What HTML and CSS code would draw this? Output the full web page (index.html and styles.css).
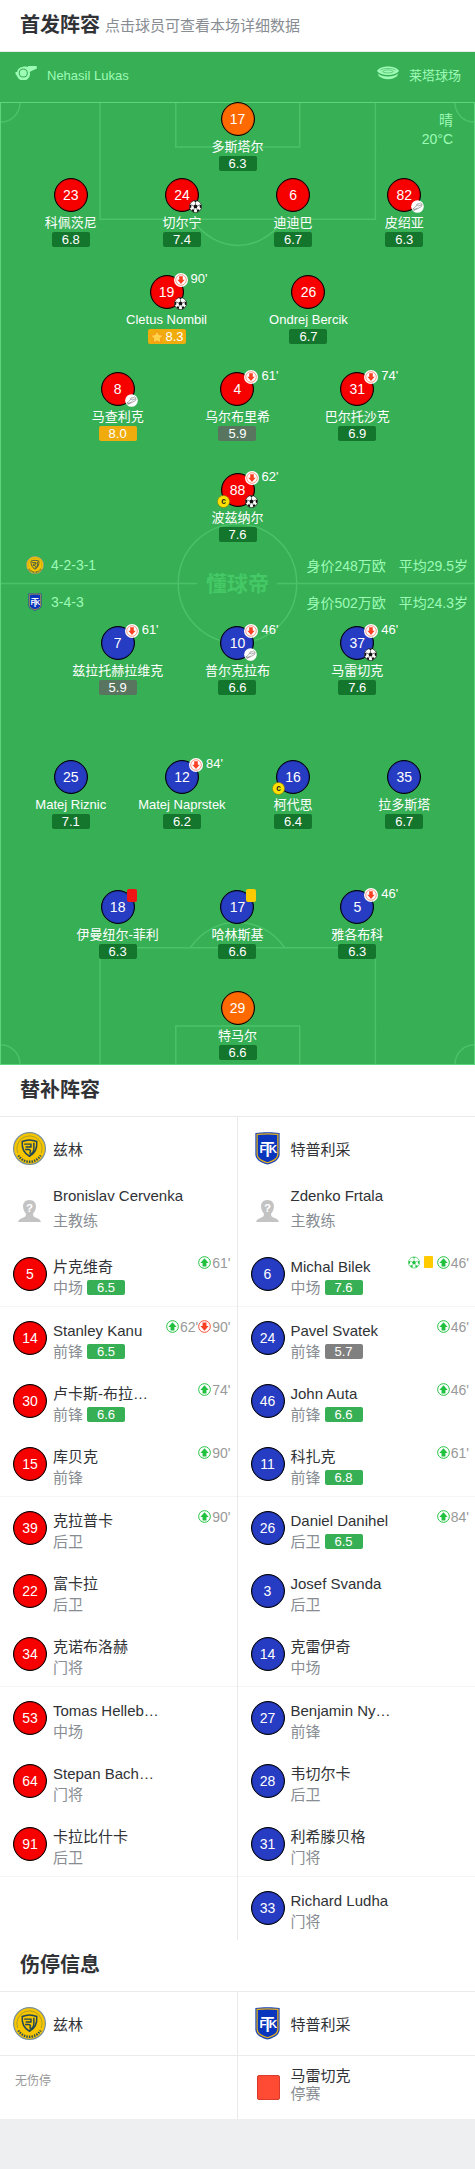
FILE: index.html
```html
<!DOCTYPE html>
<html lang="zh-CN">
<head>
    <meta charset="UTF-8">
    <meta name="viewport" content="width=device-width, initial-scale=1">
    <title>首发阵容</title>
    <link rel="stylesheet" href="styles.css">
</head>
<body>
    <!-- shared icons -->
    <svg class="sprite" aria-hidden="true">
        <symbol id="i-down" viewBox="0 0 14 14">
            <circle cx="7" cy="7" r="7" fill="#fff"/>
            <circle cx="7" cy="7" r="5.300" fill="none" stroke="#fa6b55" stroke-width=".7"/>
            <path d="M5.200 3.300h3.600v3.400h1.900L7 10.900 3.300 6.700h1.900z" fill="#fa4024"/>
        </symbol>
        <symbol id="i-out" viewBox="0 0 12 12">
            <circle cx="6" cy="6" r="5.400" fill="#fff" stroke="#fa4b32" stroke-width=".9"/>
            <path d="M4.200 2.300h3.600v3.300h2L6 9.900 2.200 5.600h2z" fill="#fa4024"/>
        </symbol>
        <symbol id="i-in" viewBox="0 0 12 12">
            <circle cx="6" cy="6" r="5.400" fill="#fff" stroke="#1fc13f" stroke-width=".9"/>
            <path d="M4.200 9.700h3.600V6.400h2L6 2.100 2.200 6.400h2z" fill="#1fc13f"/>
        </symbol>
        <symbol id="i-ball" viewBox="0 0 14 14">
            <circle cx="7" cy="7" r="6.500" fill="#fff" stroke="currentColor" stroke-width=".7"/>
            <path d="M7 4.600l2.300 1.700-.9 2.700H5.600l-.9-2.700zM5 .9h4L7 2.400zM.7 5.500L2.600 5.200 2.400 8 .8 8.800zM13.300 5.500l-1.900-.3.200 2.800 1.600.8zM3.200 10l2.300.9-.4 2.200-2.400-1.400zM10.800 10l-2.300.9.400 2.200 2.400-1.400z" fill="currentColor"/>
            <path d="M7 2.400v2.200M2.600 5.200l2.100 1.100M11.400 5.200L9.300 6.300M5.600 9l-.4 1.900M8.400 9l.4 1.900" stroke="currentColor" stroke-width=".6"/>
        </symbol>
        <symbol id="i-boot" viewBox="0 0 14 14">
            <circle cx="7" cy="7" r="6.800" fill="#fff"/>
            <path d="M2.200 9.400C4 8.800 5 7.500 6.200 5.200L7.300 3.800l1.200.7 1.700-1.300L12 4.800 11.200 7 7.500 9.200 3.600 11c-1 .2-1.600-.9-1.400-1.600zM6.200 5.200l2 1.300L11.500 5M3.200 10.600L7 8.500" fill="none" stroke="#777" stroke-width=".7" stroke-linejoin="round"/>
        </symbol>
        <symbol id="i-captain" viewBox="0 0 14 14">
            <circle cx="7" cy="7" r="6.500" fill="#ffe100" stroke="#8a7f10" stroke-width=".7"/>
            <text class="captain-text" x="7" y="10" text-anchor="middle">c</text>
        </symbol>
        <symbol id="i-star" viewBox="0 0 14 14">
            <path d="M7 .8l2 3.800 4.400.7-3.100 3.100.7 4.500L7 11l-4 1.900.7-4.500L.6 5.300 5 4.600z" fill="#ffd24a" stroke="#f98a10" stroke-width=".8" stroke-linejoin="round"/>
        </symbol>
        <symbol id="i-coach" viewBox="0 0 24 24">
            <path d="M12 0c4.500 0 7 3 6.700 7.200-.2 3-1.500 5.300-2.900 6.800-.4 2.500.5 3.500 3 4.600 2.700 1.100 4.500 1.900 5.200 4.400H0c.7-2.500 2.500-3.300 5.200-4.400 2.500-1.100 3.400-2.100 3-4.600C6.800 12.500 5.500 10.200 5.300 7.200 5 3 7.500 0 12 0z" fill="#c3c3c3"/>
            <text class="coach-text" x="12" y="13" text-anchor="middle">?</text>
        </symbol>
        <symbol id="i-whistle" viewBox="0 0 22 14">
            <path d="M7.500 1C9 .3 11 .5 12.500 1l1-1h8l.500 2.500-6.500 3-.8.5A6.600 6.600 0 0 1 2 10L.5 8V6L2 6a6.500 6.500 0 0 1 5.500-5z" fill="#9dfbb6"/>
            <circle cx="8.300" cy="7" r="4.600" fill="#37af55"/>
            <circle cx="8.300" cy="7" r="3.500" fill="#9dfbb6"/>
        </symbol>
        <symbol id="i-stadium" viewBox="0 0 22 13">
            <path d="M0 4.600C2 .9 7 0 11 0s9 .9 11 4.600c-2 2.800-6.500 4-11 4S2 7.400 0 4.600z" fill="#9dfbb6"/>
            <path d="M.6 6.800C3 9 7 10 11 10s8-1 10.400-3.200L20 9.700c-2.500 1.900-5.500 3-9 3s-6.500-1.100-9-3z" fill="#9dfbb6"/>
            <path d="M3 3.900c3-2.600 13-2.600 16 0M5.500 5.200c2-2.400 9-2.400 11 0-2.500 1.700-8.500 1.700-11 0z" fill="none" stroke="#37af55" stroke-width=".6"/>
        </symbol>
        <symbol id="i-zlin" viewBox="0 0 34 34">
            <circle cx="17" cy="17" r="16.400" fill="#f6c500" stroke="#78909a" stroke-width="1.200"/>
            <circle cx="17" cy="17" r="13" fill="none" stroke="#8a8a3c" stroke-width=".6" stroke-dasharray="50 32" transform="rotate(160 17 17)"/>
            <path d="M5.500 24.200A13.500 13.500 0 0 0 28.500 24.200" fill="none" stroke="#2b4b58" stroke-width="2.400" stroke-dasharray="1.500 1.100"/>
            <path d="M9.500 9.800c5-2.200 10-2.200 15 0 .5 6.500-1.500 12-7.500 15.200C11 21.800 9 16.300 9.500 9.800z" fill="none" stroke="#214654" stroke-width="1.500"/>
            <path d="M11.500 12.500h7v3h-5.500M21.500 11v6c0 3.500-2 5.500-4.500 6M12.500 18h3.500c2.500 0 2.500 2.500 1 3.500" fill="none" stroke="#214654" stroke-width="1.500"/>
        </symbol>
        <symbol id="i-teplice" viewBox="0 0 26 34">
            <path d="M.5 1C8 0 18 0 25.500 1v22c0 5-4.500 8.500-12.500 10.500C5 31.500.5 28 .5 23z" fill="#1740b4"/>
            <path d="M2.300 2.500c7-.8 14.400-.8 21.400 0V23c0 4-4 6.800-10.700 8.700C6.300 29.800 2.300 27 2.300 23z" fill="#0a35bd" stroke="#e5b21c" stroke-width="1.300"/>
            <text class="crest-letter" x="8.500" y="22" text-anchor="middle">F</text>
            <text class="crest-letter crest-tall" x="13" y="26" text-anchor="middle">T</text>
            <text class="crest-letter" x="18.500" y="22" text-anchor="middle">K</text>
        </symbol>
    </svg>

    <main class="page">
        <header class="section-head">
            <h2>首发阵容</h2>
            <span class="hint">点击球员可查看本场详细数据</span>
        </header>

        <section class="lineup">
            <div class="match-info">
                <span class="referee"><svg class="info-icon"><use href="#i-whistle"/></svg>Nehasil Lukas</span>
                <span class="stadium"><svg class="info-icon"><use href="#i-stadium"/></svg>莱塔球场</span>
            </div>

            <div class="pitch">
                <svg class="pitch-lines" viewBox="0 0 475 963" preserveAspectRatio="none" aria-hidden="true">
                    <g fill="none" stroke="#4bc26a" stroke-width="1.500">
                        <path d="M99.500 0v116.500h276.500V0M175.500 0v44h124.500V0M192 116.500c24 35 68 35 92 0"/>
                        <path d="M99.500 963V846.500h276.500V963M175.500 963v-38h124.500v38M190 846.500c24-34 71-34 95 0"/>
                        <path d="M0 19A19 19 0 0 0 19 0M475 19A19 19 0 0 1 456 0M0 944a19 19 0 0 1 19 19M475 944a19 19 0 0 0-19 19"/>
                        <path d="M0 481.500h197M277 481.500h198"/>
                        <circle cx="237.500" cy="481.500" r="59.500"/>
                    </g>
                </svg>
                <span class="watermark">懂球帝</span>
                <div class="weather">晴<br>20°C</div>

                <div class="formations">
                    <div class="formation">
                        <svg class="mini-crest"><use href="#i-zlin"/></svg>
                        <span class="shape">4-2-3-1</span>
                        <span>身价248万欧</span>
                        <span>平均29.5岁</span>
                    </div>
                    <div class="formation">
                        <svg class="mini-crest"><use href="#i-teplice"/></svg>
                        <span class="shape">3-4-3</span>
                        <span>身价502万欧</span>
                        <span>平均24.3岁</span>
                    </div>
                </div>

                <div class="half home">
                    <div class="line one">
                        <a class="player" href="#"><span class="num keeper">17</span><span class="name">多斯塔尔</span><span class="rate">6.3</span></a>
                    </div>
                    <div class="line four">
                        <a class="player" href="#"><span class="num red">23</span><span class="name">科佩茨尼</span><span class="rate">6.8</span></a>
                        <a class="player" href="#"><span class="num red">24<svg class="tag tag-br"><use href="#i-ball"/></svg></span><span class="name">切尔宁</span><span class="rate">7.4</span></a>
                        <a class="player" href="#"><span class="num red">6</span><span class="name">迪迪巴</span><span class="rate">6.7</span></a>
                        <a class="player" href="#"><span class="num red">82<svg class="tag tag-br"><use href="#i-boot"/></svg></span><span class="name">皮绍亚</span><span class="rate">6.3</span></a>
                    </div>
                    <div class="line two">
                        <a class="player" href="#"><span class="num red">19<span class="tag-off"><svg><use href="#i-down"/></svg>90'</span><svg class="tag tag-br"><use href="#i-ball"/></svg></span><span class="name">Cletus Nombil</span><span class="rate gold"><svg><use href="#i-star"/></svg>8.3</span></a>
                        <a class="player" href="#"><span class="num red">26</span><span class="name">Ondrej Bercik</span><span class="rate">6.7</span></a>
                    </div>
                    <div class="line three">
                        <a class="player" href="#"><span class="num red">8<svg class="tag tag-br"><use href="#i-boot"/></svg></span><span class="name">马查利克</span><span class="rate gold">8.0</span></a>
                        <a class="player" href="#"><span class="num red">4<span class="tag-off"><svg><use href="#i-down"/></svg>61'</span></span><span class="name">乌尔布里希</span><span class="rate low">5.9</span></a>
                        <a class="player" href="#"><span class="num red">31<span class="tag-off"><svg><use href="#i-down"/></svg>74'</span></span><span class="name">巴尔托沙克</span><span class="rate">6.9</span></a>
                    </div>
                    <div class="line one">
                        <a class="player" href="#"><span class="num red">88<span class="tag-off"><svg><use href="#i-down"/></svg>62'</span><svg class="tag tag-bl"><use href="#i-captain"/></svg><svg class="tag tag-br"><use href="#i-ball"/></svg></span><span class="name">波兹纳尔</span><span class="rate">7.6</span></a>
                    </div>
                </div>

                <div class="half away">
                    <div class="line three">
                        <a class="player" href="#"><span class="num blue">7<span class="tag-off"><svg><use href="#i-down"/></svg>61'</span></span><span class="name">兹拉托赫拉维克</span><span class="rate low">5.9</span></a>
                        <a class="player" href="#"><span class="num blue">10<span class="tag-off"><svg><use href="#i-down"/></svg>46'</span><svg class="tag tag-br"><use href="#i-boot"/></svg></span><span class="name">普尔克拉布</span><span class="rate">6.6</span></a>
                        <a class="player" href="#"><span class="num blue">37<span class="tag-off"><svg><use href="#i-down"/></svg>46'</span><svg class="tag tag-br"><use href="#i-ball"/></svg></span><span class="name">马雷切克</span><span class="rate">7.6</span></a>
                    </div>
                    <div class="line four">
                        <a class="player" href="#"><span class="num blue">25</span><span class="name">Matej Riznic</span><span class="rate">7.1</span></a>
                        <a class="player" href="#"><span class="num blue">12<span class="tag-off"><svg><use href="#i-down"/></svg>84'</span></span><span class="name">Matej Naprstek</span><span class="rate">6.2</span></a>
                        <a class="player" href="#"><span class="num blue">16<svg class="tag tag-bl"><use href="#i-captain"/></svg></span><span class="name">柯代思</span><span class="rate">6.4</span></a>
                        <a class="player" href="#"><span class="num blue">35</span><span class="name">拉多斯塔</span><span class="rate">6.7</span></a>
                    </div>
                    <div class="line three">
                        <a class="player" href="#"><span class="num blue">18<i class="tag-card card-red"></i></span><span class="name">伊曼纽尔-菲利</span><span class="rate">6.3</span></a>
                        <a class="player" href="#"><span class="num blue">17<i class="tag-card card-yellow"></i></span><span class="name">哈林斯基</span><span class="rate">6.6</span></a>
                        <a class="player" href="#"><span class="num blue">5<span class="tag-off"><svg><use href="#i-down"/></svg>46'</span></span><span class="name">雅各布科</span><span class="rate">6.3</span></a>
                    </div>
                    <div class="line one">
                        <a class="player" href="#"><span class="num keeper">29</span><span class="name">特马尔</span><span class="rate">6.6</span></a>
                    </div>
                </div>
            </div>
        </section>

        <header class="section-head">
            <h2>替补阵容</h2>
        </header>
        <section class="columns">
            <div class="column">
                <div class="team"><svg class="crest"><use href="#i-zlin"/></svg>兹林</div>
                <div class="coach">
                    <svg class="avatar"><use href="#i-coach"/></svg>
                    <div>Bronislav Cervenka<span>主教练</span></div>
                </div>
                <ul class="subs">
                    <li><a href="#"><span class="num red">5</span><span class="sub-text"><span class="sub-name">片克维奇</span><span class="sub-pos">中场<b class="rate">6.5</b></span></span><span class="events"><svg><use href="#i-in"/></svg>61'</span></a></li>
                    <li><a href="#"><span class="num red">14</span><span class="sub-text"><span class="sub-name">Stanley Kanu</span><span class="sub-pos">前锋<b class="rate">6.5</b></span></span><span class="events"><svg><use href="#i-in"/></svg>62'<svg><use href="#i-out"/></svg>90'</span></a></li>
                    <li><a href="#"><span class="num red">30</span><span class="sub-text"><span class="sub-name">卢卡斯-布拉…</span><span class="sub-pos">前锋<b class="rate">6.6</b></span></span><span class="events"><svg><use href="#i-in"/></svg>74'</span></a></li>
                    <li><a href="#"><span class="num red">15</span><span class="sub-text"><span class="sub-name">库贝克</span><span class="sub-pos">前锋</span></span><span class="events"><svg><use href="#i-in"/></svg>90'</span></a></li>
                    <li><a href="#"><span class="num red">39</span><span class="sub-text"><span class="sub-name">克拉普卡</span><span class="sub-pos">后卫</span></span><span class="events"><svg><use href="#i-in"/></svg>90'</span></a></li>
                    <li><a href="#"><span class="num red">22</span><span class="sub-text"><span class="sub-name">富卡拉</span><span class="sub-pos">后卫</span></span></a></li>
                    <li><a href="#"><span class="num red">34</span><span class="sub-text"><span class="sub-name">克诺布洛赫</span><span class="sub-pos">门将</span></span></a></li>
                    <li><a href="#"><span class="num red">53</span><span class="sub-text"><span class="sub-name">Tomas Helleb…</span><span class="sub-pos">中场</span></span></a></li>
                    <li><a href="#"><span class="num red">64</span><span class="sub-text"><span class="sub-name">Stepan Bach…</span><span class="sub-pos">门将</span></span></a></li>
                    <li><a href="#"><span class="num red">91</span><span class="sub-text"><span class="sub-name">卡拉比什卡</span><span class="sub-pos">后卫</span></span></a></li>
                </ul>
            </div>
            <div class="column">
                <div class="team"><svg class="crest"><use href="#i-teplice"/></svg>特普利采</div>
                <div class="coach">
                    <svg class="avatar"><use href="#i-coach"/></svg>
                    <div>Zdenko Frtala<span>主教练</span></div>
                </div>
                <ul class="subs">
                    <li><a href="#"><span class="num blue">6</span><span class="sub-text"><span class="sub-name">Michal Bilek</span><span class="sub-pos">中场<b class="rate">7.6</b></span></span><span class="events"><svg class="goal"><use href="#i-ball"/></svg><i class="card-yellow"></i><svg><use href="#i-in"/></svg>46'</span></a></li>
                    <li><a href="#"><span class="num blue">24</span><span class="sub-text"><span class="sub-name">Pavel Svatek</span><span class="sub-pos">前锋<b class="rate low">5.7</b></span></span><span class="events"><svg><use href="#i-in"/></svg>46'</span></a></li>
                    <li><a href="#"><span class="num blue">46</span><span class="sub-text"><span class="sub-name">John Auta</span><span class="sub-pos">前锋<b class="rate">6.6</b></span></span><span class="events"><svg><use href="#i-in"/></svg>46'</span></a></li>
                    <li><a href="#"><span class="num blue">11</span><span class="sub-text"><span class="sub-name">科扎克</span><span class="sub-pos">前锋<b class="rate">6.8</b></span></span><span class="events"><svg><use href="#i-in"/></svg>61'</span></a></li>
                    <li><a href="#"><span class="num blue">26</span><span class="sub-text"><span class="sub-name">Daniel Danihel</span><span class="sub-pos">后卫<b class="rate">6.5</b></span></span><span class="events"><svg><use href="#i-in"/></svg>84'</span></a></li>
                    <li><a href="#"><span class="num blue">3</span><span class="sub-text"><span class="sub-name">Josef Svanda</span><span class="sub-pos">后卫</span></span></a></li>
                    <li><a href="#"><span class="num blue">14</span><span class="sub-text"><span class="sub-name">克雷伊奇</span><span class="sub-pos">中场</span></span></a></li>
                    <li><a href="#"><span class="num blue">27</span><span class="sub-text"><span class="sub-name">Benjamin Ny…</span><span class="sub-pos">前锋</span></span></a></li>
                    <li><a href="#"><span class="num blue">28</span><span class="sub-text"><span class="sub-name">韦切尔卡</span><span class="sub-pos">后卫</span></span></a></li>
                    <li><a href="#"><span class="num blue">31</span><span class="sub-text"><span class="sub-name">利希滕贝格</span><span class="sub-pos">门将</span></span></a></li>
                    <li><a href="#"><span class="num blue">33</span><span class="sub-text"><span class="sub-name">Richard Ludha</span><span class="sub-pos">门将</span></span></a></li>
                </ul>
            </div>
        </section>

        <header class="section-head">
            <h2>伤停信息</h2>
        </header>
        <section class="columns injuries">
            <div class="column">
                <div class="team"><svg class="crest"><use href="#i-zlin"/></svg>兹林</div>
                <p class="none">无伤停</p>
            </div>
            <div class="column">
                <div class="team"><svg class="crest"><use href="#i-teplice"/></svg>特普利采</div>
                <div class="absent"><i class="ban"></i><div>马雷切克<span>停赛</span></div></div>
            </div>
        </section>
    </main>
</body>
</html>
```

FILE: styles.css
```css
* {
    margin: 0;
    padding: 0;
    box-sizing: border-box;
}

body {
    font-family: "Liberation Sans", "Noto Sans CJK SC", sans-serif;
    font-size: 15px;
    color: #303236;
    background: #eeeff1;
}

a {
    color: inherit;
    text-decoration: none;
}

.sprite {
    display: none;
}

.page {
    background: #fff;
}

.section-head {
    display: flex;
    align-items: center;
    gap: 5px;
    height: 52px;
    padding: 0 20px 2px;
    border-bottom: 1px solid #e9eaeb;
}

.section-head h2 {
    font-size: 20px;
    line-height: 24px;
}

.hint {
    color: #888d93;
}

/* pitch */
.lineup {
    background: #37af55;
    color: #fff;
    font-size: 13px;
}

.match-info {
    display: flex;
    justify-content: space-between;
    height: 50px;
    padding: 0 14px 0 15px;
    line-height: 48px;
    color: #9dfbb6;
}

.match-info span {
    display: flex;
    gap: 10px;
}

.info-icon {
    width: 22px;
    height: 14px;
    margin-top: 14px;
}

.pitch {
    position: relative;
    border: 1px solid #5cd67c;
}

.pitch-lines {
    position: absolute;
    inset: 0;
    width: 100%;
    height: 100%;
}

.watermark {
    position: absolute;
    top: 50%;
    left: 50%;
    transform: translate(-50%, -50%);
    font-size: 21px;
    font-weight: bold;
    line-height: 24px;
    color: #45c866;
}

.weather {
    position: absolute;
    top: 8px;
    right: 21px;
    font-size: 14px;
    line-height: 19px;
    text-align: right;
    color: #9dfbb6;
}

.formations {
    position: absolute;
    top: 50%;
    left: 0;
    right: 0;
    transform: translateY(-50%);
    font-size: 14px;
    color: #9dfbb6;
}

.formation {
    display: flex;
    align-items: center;
    gap: 13px;
    height: 37px;
    padding: 0 6px 0 25px;
}

.mini-crest {
    width: 18px;
    height: 18px;
}

.formation .shape {
    margin-left: -6px;
    margin-right: auto;
}

.half {
    position: relative;
    display: grid;
}

.home {
    margin-top: -1px;
    grid-template-rows: 76px 97px 97px 101px 110px;
}

.away {
    grid-template-rows: 134px 130px 101px 73px;
    padding-top: 43px;
}

.line {
    display: grid;
    grid-auto-flow: column;
    grid-auto-columns: minmax(0, 1fr);
    align-items: start;
}

.line.two {
    padding: 0 20%;
}

.line.three {
    padding: 0 12%;
}

.line.four {
    padding: 0 3%;
}

.player {
    display: flex;
    flex-direction: column;
    align-items: center;
}

.num {
    position: relative;
    flex: none;
    width: 34px;
    height: 34px;
    border: 1px solid #000;
    border-radius: 50%;
    box-shadow: inset 0 0 1px #000;
    font-size: 14px;
    line-height: 32px;
    text-align: center;
    color: #fff;
}

.red {
    background: #f60000;
}

.blue {
    background: #263cc2;
}

.keeper {
    background: #ff6a00;
}

.name {
    margin-top: 2px;
    line-height: 18px;
    white-space: nowrap;
}

.rate {
    display: flex;
    align-items: center;
    justify-content: center;
    gap: 2px;
    width: 38px;
    height: 15px;
    border-radius: 2px;
    font-size: 13px;
    font-weight: normal;
    line-height: 15px;
    color: #fff;
    background: #14752d;
}

.rate.gold {
    background: #f0ac0c;
}

.rate.low {
    background: #59755f;
}

.rate svg {
    flex: none;
    width: 14px;
    height: 14px;
}

/* event marks around a shirt number */
.tag {
    position: absolute;
    top: 21px;
    width: 13px;
    height: 13px;
    color: #111;
}

.tag-br {
    left: 23px;
}

.tag-bl {
    left: -5px;
}

.tag-off {
    position: absolute;
    top: -3px;
    left: 23px;
    display: flex;
    gap: 3px;
    font-size: 13px;
    line-height: 12px;
}

.tag-off svg {
    width: 14px;
    height: 14px;
}

.tag-card {
    position: absolute;
    top: -2px;
    left: 25px;
    width: 10px;
    height: 13px;
    border-radius: 2px;
}

.card-red {
    background: #f01414;
}

.card-yellow {
    background: #ffcb00;
}

.captain-text {
    font-size: 9px;
    font-weight: bold;
    fill: #222;
}

.coach-text {
    font-size: 12px;
    font-weight: bold;
    fill: #fff;
}

.crest-letter {
    font-size: 12px;
    font-weight: bold;
    fill: #fff;
}

.crest-tall {
    font-size: 23px;
    font-weight: normal;
}

/* two team columns */
.columns {
    display: grid;
    grid-template-columns: 1fr 1fr;
}

.column:first-child {
    border-right: 1px solid #e9eaeb;
}

.team {
    display: flex;
    align-items: center;
    gap: 7px;
    height: 63px;
    padding-left: 13px;
}

.crest {
    width: 33px;
    height: 33px;
}

.coach {
    display: flex;
    align-items: center;
    gap: 12px;
    height: 63px;
    padding-left: 18px;
    line-height: 25px;
}

.coach div {
    margin-top: -8px;
}

.coach span,
.absent span {
    display: block;
    color: #888d93;
}

.avatar {
    width: 23px;
    height: 23px;
}

.subs {
    list-style: none;
}

.subs li:nth-child(3n + 1) {
    border-bottom: 1px solid #f4f5f5;
}

.subs li:nth-child(11) {
    border: none;
}

.subs a {
    display: flex;
    height: 63px;
    padding: 13px 6px 0 13px;
}

.subs .num {
    margin-top: 1px;
}

.sub-text {
    flex: 1;
    margin-left: 6px;
    line-height: 21px;
    white-space: nowrap;
}

.sub-name {
    display: block;
}

.sub-pos {
    display: flex;
    align-items: center;
    gap: 4px;
    color: #888d93;
}

.subs .rate {
    background: #37af55;
}

.subs .rate.low {
    background: #808080;
}

.events {
    display: flex;
    font-size: 14px;
    line-height: 14px;
    color: #999;
}

.events svg {
    width: 13px;
    height: 13px;
    margin-right: 1px;
}

.events .goal {
    width: 12px;
    margin-right: 4px;
    color: #1fc13f;
}

.events i {
    width: 9px;
    height: 12px;
    margin-right: 4px;
    border-radius: 1px;
}

/* injuries */
.injuries .team {
    height: 64px;
    border-bottom: 1px solid #e9eaeb;
}

.none {
    padding: 16px 15px;
    font-size: 12px;
    line-height: 18px;
    color: #999;
}

.absent {
    display: flex;
    align-items: center;
    gap: 11px;
    height: 63px;
    padding-left: 19px;
    line-height: 18px;
}

.absent div {
    margin-top: -6px;
}

.ban {
    width: 23px;
    height: 25px;
    border: 1px solid #d93a2b;
    border-radius: 2px;
    background: #ff4b33;
}
```
